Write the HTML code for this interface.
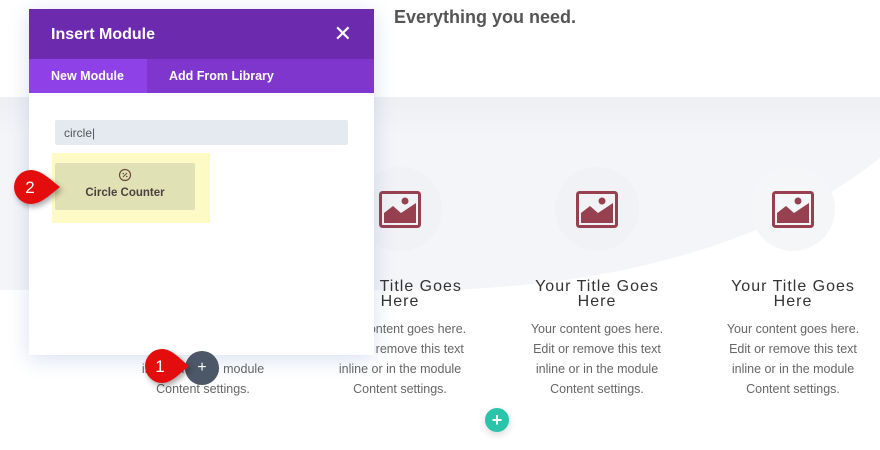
<!DOCTYPE html>
<html><head><style>
*{margin:0;padding:0;box-sizing:border-box}
body{width:880px;height:450px;overflow:hidden;position:relative;background:#fff;font-family:"Liberation Sans",sans-serif}
.abs{position:absolute}
.col{position:absolute;width:170px;text-align:center}
.circ{position:absolute;width:84px;height:84px;border-radius:50%;background:#f1f2f5}
.title{font-size:16px;letter-spacing:1px;color:#333;line-height:15px}
.body{font-size:12.5px;color:#666;line-height:20px;margin-top:10px}
.ic{position:absolute;width:42px;height:37px}
</style></head><body>
<svg class="abs" style="left:0;top:0" width="880" height="450">
<defs><linearGradient id="g" x1="0" y1="0" x2="0" y2="1"><stop offset="0" stop-color="#eeeff3"/><stop offset="0.2" stop-color="#f4f5f8"/></linearGradient></defs>
<rect x="0" y="97" width="880" height="193" fill="url(#g)"/>
<path d="M420 291 Q720 285 880 158 L880 300 L420 300Z" fill="#fff"/>
</svg>
<div class="abs" style="left:394px;top:7px;font-size:18px;font-weight:bold;color:#555">Everything you need.</div>

<div class="circ" style="left:358px;top:167px"></div>
<div class="circ" style="left:555px;top:167px"></div>
<div class="circ" style="left:751px;top:167px;background:#f5f6f8"></div>
<svg class="ic" style="left:379px;top:191px" viewBox="0 0 42 37"><rect x="1.5" y="1.5" width="39" height="34" rx="2" fill="none" stroke="#97404f" stroke-width="3"/><path d="M5 32 L5 22 L14 15 L22 22 L37 12 L37 32Z" fill="#97404f"/><circle cx="26" cy="10" r="3.5" fill="#97404f"/></svg>
<svg class="ic" style="left:576px;top:191px" viewBox="0 0 42 37"><rect x="1.5" y="1.5" width="39" height="34" rx="2" fill="none" stroke="#97404f" stroke-width="3"/><path d="M5 32 L5 22 L14 15 L22 22 L37 12 L37 32Z" fill="#97404f"/><circle cx="26" cy="10" r="3.5" fill="#97404f"/></svg>
<svg class="ic" style="left:772px;top:191px" viewBox="0 0 42 37"><rect x="1.5" y="1.5" width="39" height="34" rx="2" fill="none" stroke="#97404f" stroke-width="3"/><path d="M5 32 L5 22 L14 15 L22 22 L37 12 L37 32Z" fill="#97404f"/><circle cx="26" cy="10" r="3.5" fill="#97404f"/></svg>

<div class="col" style="left:118px;top:279px"><div class="title">Your Title Goes<br>Here</div><div class="body">Your content goes here.<br>Edit or remove this text<br>inline or in the module<br>Content settings.</div></div>
<div class="col" style="left:315px;top:279px"><div class="title">Your Title Goes<br>Here</div><div class="body">Your content goes here.<br>Edit or remove this text<br>inline or in the module<br>Content settings.</div></div>
<div class="col" style="left:512px;top:279px"><div class="title">Your Title Goes<br>Here</div><div class="body">Your content goes here.<br>Edit or remove this text<br>inline or in the module<br>Content settings.</div></div>
<div class="col" style="left:708px;top:279px"><div class="title">Your Title Goes<br>Here</div><div class="body">Your content goes here.<br>Edit or remove this text<br>inline or in the module<br>Content settings.</div></div>

<div class="abs" style="left:485px;top:408px;width:24px;height:24px;border-radius:50%;background:#29c4a9;color:#fff;font-weight:bold;font-size:18px;line-height:24px;text-align:center;box-shadow:0 3px 8px rgba(0,0,0,.15)">+</div>

<!-- dialog -->
<div class="abs" style="left:29px;top:9px;width:345px;height:346px;background:#fff;box-shadow:0 4px 20px rgba(60,100,180,.2)">
 <div style="height:50px;background:#6c2aaf;color:#fff;font-size:16px;font-weight:bold;padding:17px 0 0 22px;position:relative">Insert Module<span style="position:absolute;right:22px;top:12px;font-size:22px;font-weight:normal">✕</span></div>
 <div style="height:34px;background:#7e36cd;color:#fff;font-size:12.5px;font-weight:bold;position:relative">
  <div style="position:absolute;left:0;top:0;width:118px;height:34px;background:#8e41e6;padding:10px 0 0 22px">New Module</div>
  <div style="position:absolute;left:140px;top:10px">Add From Library</div>
 </div>
 <div class="abs" style="left:26px;top:111px;width:293px;height:25px;background:#e5eaf1;border-radius:2px;font-size:12px;color:#555;padding:6px 0 0 9px">circle|</div>
 <div class="abs" style="left:23px;top:144px;width:158px;height:70px;background:#fdfac5"></div>
 <div class="abs" style="left:26px;top:154px;width:140px;height:47px;background:#e0e1b5;border-radius:2px;text-align:center;font-size:11.5px;font-weight:bold;color:#4a4040">
  <svg width="14" height="14" viewBox="0 0 14 14" style="margin-top:5px"><circle cx="7" cy="7" r="5.5" fill="none" stroke="#6b4a3a" stroke-width="1.2"/><path d="M5 9 L9 5" stroke="#6b4a3a" stroke-width="1.1"/><circle cx="5.2" cy="5.5" r=".8" fill="#6b4a3a"/><circle cx="8.8" cy="8.5" r=".8" fill="#6b4a3a"/></svg>
  <div style="margin-top:2px">Circle Counter</div></div>
</div>

<!-- badges -->
<svg class="abs" style="left:4px;top:168px;filter:drop-shadow(2px 3px 3px rgba(0,0,0,.35))" width="60" height="40"><path d="M27 2 A17 17 0 1 0 27 36 C37 36 47 26 56 19 C47 12 37 2 27 2Z" fill="#e40d0d"/><text x="26" y="25" font-size="17" fill="#fff" text-anchor="middle" font-family="Liberation Sans">2</text></svg>
<div class="abs" style="left:185px;top:351px;width:34px;height:34px;border-radius:50%;background:#4c5767;color:#fff;text-align:center;line-height:34px;font-size:16px">+</div>
<svg class="abs" style="left:135px;top:347px;filter:drop-shadow(2px 3px 3px rgba(0,0,0,.35))" width="60" height="40"><path d="M27 2 A17 17 0 1 0 27 36 C37 36 45 26 54 19 C45 12 37 2 27 2Z" fill="#e40d0d"/><text x="25" y="25" font-size="17" fill="#fff" text-anchor="middle" font-family="Liberation Sans">1</text></svg>
</body></html>
